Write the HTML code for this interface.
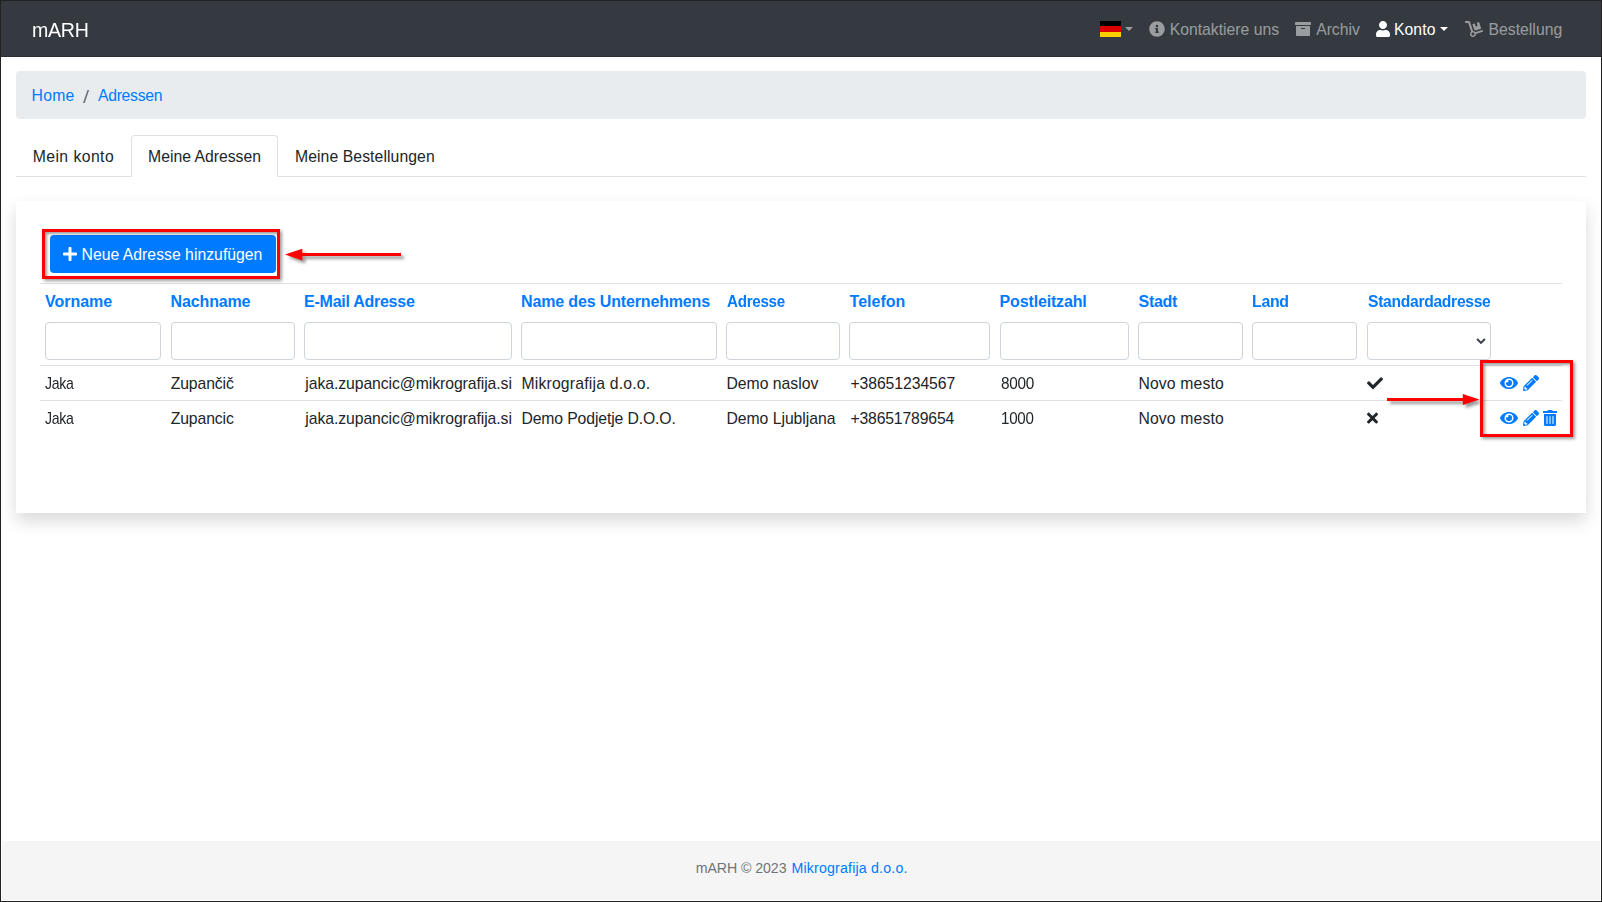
<!DOCTYPE html>
<html lang="de">
<head>
<meta charset="utf-8">
<title>mARH - Adressen</title>
<style>
*{box-sizing:border-box}
html,body{margin:0;padding:0}
body{width:1602px;height:902px;position:relative;overflow:hidden;background:#fff;font-family:"Liberation Sans",sans-serif;font-size:16px;color:#212529}
#frame{position:absolute;left:0;top:0;width:1602px;height:902px;border:1px solid #222;z-index:50;pointer-events:none}
a{text-decoration:none}
.t{position:absolute;white-space:nowrap;display:block}
.ic{position:absolute;display:block;overflow:visible}
.abs{position:absolute}
#nav{left:1px;top:1px;width:1600px;height:56px;background:#343a40;border-bottom:1px solid #292e34}
#bc{left:16px;top:71px;width:1570px;height:48px;background:#e9ecef;border-radius:4px}
#tabline{left:16px;top:176px;width:1570px;height:1px;background:#dee2e6}
#tabon{left:131px;top:135px;width:147px;height:42px;border:1px solid #dee2e6;border-bottom-color:#fff;border-radius:4px 4px 0 0;background:#fff}
#card{left:16px;top:201px;width:1570px;height:312px;background:#fff;box-shadow:0 8px 16px rgba(0,0,0,.15)}
#btn{left:50px;top:235px;width:226px;height:38px;background:#007bff;border-radius:4px;border:0;padding:0;margin:0}
.red{border:3px solid #ff0000;box-shadow:2px 2px 3px rgba(0,0,0,.38), inset 2px 2px 3px rgba(0,0,0,.38)}
.hl{left:40px;width:1522px;height:1px;background:#dee2e6}
.in{top:322px;height:38px;border:1px solid #ced4da;border-radius:4px;background:#fff;margin:0;padding:0 12px;outline:0;-webkit-appearance:none;appearance:none;font:inherit;color:#495057}
#foot{left:2px;top:841px;width:1598px;height:59px;background:#f5f5f5}
.caret{width:0;height:0;border-left:4.5px solid transparent;border-right:4.5px solid transparent;border-top:4.5px solid}
</style>
</head>
<body>
<header>
<nav id="nav" class="abs" aria-label="Hauptnavigation"></nav>
<span id="brand" class="t" style="left:31.80px;top:15.01px;font-size:19.7px;line-height:30px;font-weight:normal;color:#fff;letter-spacing:-0.300px;transform:scale(0.9955,1);transform-origin:0 0px">mARH</span>
<div class="navitems">
<div class="abs flag" title="Deutsch" style="left:1100px;top:21px;width:21px;height:16px;background:linear-gradient(#000 0,#000 33.3%,#dd0000 33.3%,#dd0000 66.6%,#ffce00 66.6%)"></div>
<div class="abs caret" style="left:1125px;top:27px;color:rgba(255,255,255,.5)"></div>
<svg class="ic" style="left:1149px;top:21px;width:16.000px;height:16px;" viewBox="0 0 512 512"><path fill="rgba(255,255,255,.5)" d="M256 8C119.043 8 8 119.083 8 256c0 136.997 111.043 248 248 248s248-111.003 248-248C504 119.083 392.957 8 256 8zm0 110c23.196 0 42 18.804 42 42s-18.804 42-42 42-42-18.804-42-42 18.804-42 42-42zm56 254c0 6.627-5.373 12-12 12h-88c-6.627 0-12-5.373-12-12v-24c0-6.627 5.373-12 12-12h12v-64h-12c-6.627 0-12-5.373-12-12v-24c0-6.627 5.373-12 12-12h64c6.627 0 12 5.373 12 12v100h12c6.627 0 12 5.373 12 12v24z"/></svg>
<span id="n1" class="t" style="left:1169.70px;top:18.21px;font-size:15.76px;line-height:24px;font-weight:normal;color:rgba(255,255,255,.5);letter-spacing:0.002px">Kontaktiere uns</span>
<svg class="ic" style="left:1295px;top:21px;width:16.000px;height:16px;" viewBox="0 0 512 512"><path fill="rgba(255,255,255,.5)" d="M32 448c0 17.700 14.300 32 32 32h384c17.700 0 32-14.300 32-32V160H32v288zm160-212c0-6.600 5.400-12 12-12h104c6.600 0 12 5.400 12 12v8c0 6.600-5.400 12-12 12H204c-6.600 0-12-5.400-12-12v-8zM480 32H32C14.300 32 0 46.300 0 64v48c0 8.800 7.200 16 16 16h480c8.800 0 16-7.200 16-16V64c0-17.700-14.300-32-32-32z"/></svg>
<span id="n2" class="t" style="left:1316.20px;top:18.21px;font-size:15.76px;line-height:24px;font-weight:normal;color:rgba(255,255,255,.5);letter-spacing:-0.037px">Archiv</span>
<svg class="ic" style="left:1376px;top:21px;width:14.000px;height:16px;" viewBox="0 0 448 512"><path fill="#fff" d="M224 256c70.700 0 128-57.300 128-128S294.700 0 224 0 96 57.300 96 128s57.300 128 128 128zm89.600 32h-16.700c-22.200 10.200-46.900 16-72.900 16s-50.600-5.800-72.900-16h-16.700C60.200 288 0 348.200 0 422.400V464c0 26.500 21.500 48 48 48h352c26.500 0 48-21.500 48-48v-41.600c0-74.200-60.200-134.400-134.400-134.400z"/></svg>
<span id="n3" class="t" style="left:1393.90px;top:18.21px;font-size:15.76px;line-height:24px;font-weight:normal;color:#fff;letter-spacing:0.100px">Konto</span>
<div class="abs caret" style="left:1440px;top:27px;color:#fff"></div>
<svg class="ic" style="left:1465px;top:21px;width:18.000px;height:16px;" viewBox="0 0 576 512"><path fill="rgba(255,255,255,.5)" d="M294.200 277.700c18 5 34.700 13.400 49.500 24.700l161.500-53.800c8.400-2.800 12.900-11.900 10.100-20.200L454.900 47.200c-2.800-8.400-11.900-12.900-20.200-10.100l-61.100 20.400 33.100 99.400L346 177l-33.100-99.400-61.600 20.500c-8.400 2.800-12.900 11.900-10.100 20.200l53 159.400zm281 48.700L565 296c-2.800-8.400-11.900-12.900-20.200-10.100l-213.500 71.200c-17.200-22-43.600-36.400-73.500-37L158.400 21.900C154 8.800 141.800 0 128 0H16C7.200 0 0 7.200 0 16v32c0 8.800 7.200 16 16 16h88.900l92.200 276.700c-26.100 20.400-41.700 53.600-36 90.500 6.100 39.400 37.900 72.300 77.300 79.200 60.200 10.700 112.300-34.800 113.400-92.600l213.300-71.200c8.300-2.800 12.900-11.800 10.100-20.200zM256 464c-26.500 0-48-21.500-48-48s21.500-48 48-48 48 21.500 48 48-21.500 48-48 48z"/></svg>
<span id="n4" class="t" style="left:1488.40px;top:18.21px;font-size:15.76px;line-height:24px;font-weight:normal;color:rgba(255,255,255,.5);letter-spacing:0.034px">Bestellung</span>
</div>
</header>
<main>
<nav aria-label="breadcrumb">
<div id="bc" class="abs"></div>
<a id="b1" class="t" style="left:31.50px;top:84.01px;font-size:15.76px;line-height:24px;font-weight:normal;color:#007bff;letter-spacing:0.282px">Home</a><span id="b2" class="t" style="left:82.60px;top:84.41px;font-size:15.76px;line-height:24px;font-weight:normal;color:#6c757d;letter-spacing:0.000px;transform:scale(1.4000,1.16);transform-origin:0 7px">/</span><a id="b3" class="t" style="left:98.00px;top:84.01px;font-size:15.76px;line-height:24px;font-weight:normal;color:#007bff;letter-spacing:-0.297px">Adressen</a>
</nav>
<div class="tabs" role="tablist">
<div id="tabline" class="abs"></div><div id="tabon" class="abs"></div>
<span id="t1" class="t" style="left:32.70px;top:145.01px;font-size:15.76px;line-height:24px;font-weight:normal;color:#212529;letter-spacing:0.435px">Mein konto</span><span id="t2" class="t" style="left:148.10px;top:145.01px;font-size:15.76px;line-height:24px;font-weight:normal;color:#212529;letter-spacing:-0.004px">Meine Adressen</span><span id="t3" class="t" style="left:295.00px;top:145.01px;font-size:15.76px;line-height:24px;font-weight:normal;color:#212529;letter-spacing:0.077px">Meine Bestellungen</span>
</div>
<section>
<div id="card" class="abs"></div>
<button id="btn" class="abs" type="button" aria-label="Neue Adresse hinzufügen"></button>
<svg class="ic" style="left:63px;top:246px;width:14.000px;height:16px;" viewBox="0 0 448 512"><path fill="#fff" d="M416 208H272V64c0-17.670-14.330-32-32-32h-32c-17.670 0-32 14.330-32 32v144H32c-17.670 0-32 14.330-32 32v32c0 17.670 14.330 32 32 32h144v144c0 17.670 14.330 32 32 32h32c17.670 0 32-14.330 32-32V304h144c17.670 0 32-14.330 32-32v-32c0-17.670-14.330-32-32-32z"/></svg>
<span id="bt" class="t" style="left:81.50px;top:242.81px;font-size:15.76px;line-height:24px;font-weight:normal;color:#fff;letter-spacing:0.023px">Neue Adresse hinzufügen</span>
<div class="grid" role="table">
<div class="abs hl" style="top:283px"></div>
<div class="abs hl" style="top:365px"></div>
<div class="abs hl" style="top:400px"></div>
<div role="row">
<span id="h1" class="t" style="left:45.00px;top:290.01px;font-size:16.0px;line-height:24px;font-weight:bold;color:#007bff;letter-spacing:-0.030px">Vorname</span>
<span id="h2" class="t" style="left:170.60px;top:290.01px;font-size:16.0px;line-height:24px;font-weight:bold;color:#007bff;letter-spacing:-0.146px">Nachname</span>
<span id="h3" class="t" style="left:304.10px;top:290.01px;font-size:16.0px;line-height:24px;font-weight:bold;color:#007bff;letter-spacing:-0.263px">E-Mail Adresse</span>
<span id="h4" class="t" style="left:521.10px;top:290.01px;font-size:16.0px;line-height:24px;font-weight:bold;color:#007bff;letter-spacing:-0.153px">Name des Unternehmens</span>
<span id="h5" class="t" style="left:726.80px;top:290.01px;font-size:16.0px;line-height:24px;font-weight:bold;color:#007bff;letter-spacing:-0.300px;transform:scale(0.9471,1);transform-origin:0 0px">Adresse</span>
<span id="h6" class="t" style="left:849.60px;top:290.01px;font-size:16.0px;line-height:24px;font-weight:bold;color:#007bff;letter-spacing:-0.005px">Telefon</span>
<span id="h7" class="t" style="left:999.60px;top:290.01px;font-size:16.0px;line-height:24px;font-weight:bold;color:#007bff;letter-spacing:-0.160px">Postleitzahl</span>
<span id="h8" class="t" style="left:1138.50px;top:290.01px;font-size:16.0px;line-height:24px;font-weight:bold;color:#007bff;letter-spacing:-0.268px">Stadt</span>
<span id="h9" class="t" style="left:1252.41px;top:290.01px;font-size:16.0px;line-height:24px;font-weight:bold;color:#007bff;letter-spacing:-0.300px;transform:scale(0.9931,1);transform-origin:0 0px">Land</span>
<span id="h10" class="t" style="left:1367.60px;top:290.01px;font-size:16.0px;line-height:24px;font-weight:bold;color:#007bff;letter-spacing:-0.300px;transform:scale(0.9774,1);transform-origin:0 0px">Standardadresse</span>
</div>
<div role="row">
<input class="abs in" type="text" style="left:45px;width:116px">
<input class="abs in" type="text" style="left:171px;width:124px">
<input class="abs in" type="text" style="left:304px;width:208px">
<input class="abs in" type="text" style="left:521px;width:196px">
<input class="abs in" type="text" style="left:726px;width:114px">
<input class="abs in" type="text" style="left:849px;width:141px">
<input class="abs in" type="text" style="left:1000px;width:129px">
<input class="abs in" type="text" style="left:1138px;width:105px">
<input class="abs in" type="text" style="left:1252px;width:105px">
<select class="abs in" style="left:1367px;width:124px"><option></option></select>
<svg class="ic" style="left:1476px;top:337px;width:10px;height:8px" viewBox="0 0 10 8"><path d="M1.100 2L5 5.900 8.900 2" fill="none" stroke="#3b4148" stroke-width="2"/></svg>
</div>
<div role="row">
<span id="r1a" class="t" style="left:44.90px;top:371.71px;font-size:15.76px;line-height:24px;font-weight:normal;color:#212529;letter-spacing:-0.300px;transform:scale(0.8924,1);transform-origin:0 0px">Jaka</span>
<span id="r1b" class="t" style="left:170.70px;top:371.71px;font-size:15.76px;line-height:24px;font-weight:normal;color:#212529;letter-spacing:-0.105px">Zupančič</span>
<span id="r1c" class="t" style="left:305.30px;top:371.71px;font-size:15.76px;line-height:24px;font-weight:normal;color:#212529;letter-spacing:-0.070px">jaka.zupancic@mikrografija.si</span>
<span id="r1d" class="t" style="left:521.40px;top:371.71px;font-size:15.76px;line-height:24px;font-weight:normal;color:#212529;letter-spacing:0.194px">Mikrografija d.o.o.</span>
<span id="r1e" class="t" style="left:726.40px;top:371.71px;font-size:15.76px;line-height:24px;font-weight:normal;color:#212529;letter-spacing:0.006px">Demo naslov</span>
<span id="r1f" class="t" style="left:850.40px;top:371.71px;font-size:15.76px;line-height:24px;font-weight:normal;color:#212529;letter-spacing:-0.063px">+38651234567</span>
<span id="r1g" class="t" style="left:1000.60px;top:371.71px;font-size:15.76px;line-height:24px;font-weight:normal;color:#212529;letter-spacing:-0.300px;transform:scale(0.9745,1);transform-origin:0 0px">8000</span>
<span id="r1h" class="t" style="left:1138.40px;top:371.71px;font-size:15.76px;line-height:24px;font-weight:normal;color:#212529;letter-spacing:0.147px">Novo mesto</span>
<svg class="ic" style="left:1367px;top:375px;width:16.000px;height:16px;transform:translate(0.00px,0.20px);" viewBox="0 0 512 512"><path fill="#212529" d="M173.898 439.404l-166.400-166.400c-9.997-9.997-9.997-26.206 0-36.204l36.203-36.204c9.997-9.998 26.207-9.998 36.204 0L192 312.690 432.095 72.596c9.997-9.997 26.207-9.997 36.204 0l36.203 36.204c9.997 9.997 9.997 26.206 0 36.204l-294.400 294.401c-9.998 9.997-26.207 9.997-36.204-.001z"/></svg>
<svg class="ic" style="left:1500px;top:375px;width:18.000px;height:16px;" viewBox="0 0 576 512"><path fill="#007bff" d="M572.52 241.4C518.29 135.59 410.93 64 288 64S57.68 135.64 3.48 241.41a32.35 32.35 0 0 0 0 29.19C57.71 376.41 165.07 448 288 448s230.32-71.64 284.52-177.41a32.35 32.35 0 0 0 0-29.19zM288 400a144 144 0 1 1 144-144 143.93 143.93 0 0 1-144 144zm0-240a95.31 95.31 0 0 0-25.31 3.79 47.85 47.85 0 0 1-66.9 66.9A95.78 95.78 0 1 0 288 160z"/></svg>
<svg class="ic" style="left:1523px;top:375px;width:16.000px;height:16px;" viewBox="0 0 512 512"><path fill="#007bff" d="M497.9 142.1l-46.1 46.1c-4.7 4.7-12.3 4.7-17 0l-111-111c-4.7-4.7-4.7-12.3 0-17l46.1-46.1c18.7-18.7 49.1-18.7 67.9 0l60.1 60.1c18.8 18.7 18.8 49.1 0 67.9zM284.2 99.8L21.6 362.4.4 483.9c-2.9 16.4 11.4 30.600 27.8 27.8l121.500-21.300 262.600-262.600c4.700-4.700 4.700-12.300 0-17l-111-111c-4.800-4.700-12.400-4.700-17.100 0zM124.100 339.900c-5.500-5.500-5.500-14.300 0-19.800l154-154c5.500-5.500 14.300-5.500 19.800 0s5.500 14.300 0 19.800l-154 154c-5.500 5.500-14.300 5.500-19.800 0zM88 424h48v36.300l-64.500 11.300-31.100-31.100L51.700 376H88v48z"/></svg>
</div>
<div role="row">
<span id="r2a" class="t" style="left:44.90px;top:406.51px;font-size:15.76px;line-height:24px;font-weight:normal;color:#212529;letter-spacing:-0.300px;transform:scale(0.8924,1);transform-origin:0 0px">Jaka</span>
<span id="r2b" class="t" style="left:170.70px;top:406.51px;font-size:15.76px;line-height:24px;font-weight:normal;color:#212529;letter-spacing:-0.105px">Zupancic</span>
<span id="r2c" class="t" style="left:305.30px;top:406.51px;font-size:15.76px;line-height:24px;font-weight:normal;color:#212529;letter-spacing:-0.070px">jaka.zupancic@mikrografija.si</span>
<span id="r2d" class="t" style="left:521.40px;top:406.51px;font-size:15.76px;line-height:24px;font-weight:normal;color:#212529;letter-spacing:-0.116px">Demo Podjetje D.O.O.</span>
<span id="r2e" class="t" style="left:726.40px;top:406.51px;font-size:15.76px;line-height:24px;font-weight:normal;color:#212529;letter-spacing:-0.022px">Demo Ljubljana</span>
<span id="r2f" class="t" style="left:850.40px;top:406.51px;font-size:15.76px;line-height:24px;font-weight:normal;color:#212529;letter-spacing:-0.154px">+38651789654</span>
<span id="r2g" class="t" style="left:1001.04px;top:406.51px;font-size:15.76px;line-height:24px;font-weight:normal;color:#212529;letter-spacing:-0.300px;transform:scale(0.9617,1);transform-origin:0 0px">1000</span>
<span id="r2h" class="t" style="left:1138.40px;top:406.51px;font-size:15.76px;line-height:24px;font-weight:normal;color:#212529;letter-spacing:0.147px">Novo mesto</span>
<svg class="ic" style="left:1367px;top:410px;width:11.000px;height:16px;transform:translate(0.00px,0.10px);" viewBox="0 0 352 512"><path fill="#212529" d="M242.720 256l100.070-100.070c12.280-12.280 12.280-32.190 0-44.480l-22.240-22.240c-12.280-12.280-32.190-12.280-44.480 0L176 189.280 75.930 89.210c-12.280-12.280-32.190-12.280-44.480 0L9.210 111.450c-12.280 12.280-12.280 32.190 0 44.480L109.280 256 9.210 356.070c-12.280 12.280-12.280 32.190 0 44.480l22.240 22.240c12.280 12.280 32.200 12.280 44.480 0L176 322.720l100.070 100.070c12.280 12.280 32.200 12.280 44.480 0l22.240-22.240c12.280-12.280 12.280-32.190 0-44.480L242.720 256z"/></svg>
<svg class="ic" style="left:1500px;top:410px;width:18.000px;height:16px;" viewBox="0 0 576 512"><path fill="#007bff" d="M572.52 241.4C518.29 135.59 410.93 64 288 64S57.68 135.64 3.48 241.41a32.35 32.35 0 0 0 0 29.19C57.71 376.41 165.07 448 288 448s230.32-71.64 284.52-177.41a32.35 32.35 0 0 0 0-29.19zM288 400a144 144 0 1 1 144-144 143.93 143.93 0 0 1-144 144zm0-240a95.31 95.31 0 0 0-25.31 3.79 47.85 47.85 0 0 1-66.9 66.9A95.78 95.78 0 1 0 288 160z"/></svg>
<svg class="ic" style="left:1523px;top:410px;width:16.000px;height:16px;" viewBox="0 0 512 512"><path fill="#007bff" d="M497.9 142.1l-46.1 46.1c-4.7 4.7-12.3 4.7-17 0l-111-111c-4.7-4.7-4.7-12.3 0-17l46.1-46.1c18.7-18.7 49.1-18.7 67.9 0l60.1 60.1c18.8 18.7 18.8 49.1 0 67.9zM284.2 99.8L21.6 362.4.4 483.9c-2.9 16.4 11.4 30.600 27.8 27.8l121.500-21.300 262.600-262.600c4.700-4.700 4.700-12.300 0-17l-111-111c-4.800-4.700-12.400-4.700-17.100 0zM124.100 339.900c-5.500-5.500-5.500-14.300 0-19.800l154-154c5.500-5.500 14.300-5.500 19.800 0s5.500 14.300 0 19.800l-154 154c-5.500 5.500-14.300 5.500-19.800 0zM88 424h48v36.300l-64.500 11.300-31.100-31.100L51.700 376H88v48z"/></svg>
<svg class="ic" style="left:1543px;top:410px;width:14.000px;height:16px;" viewBox="0 0 448 512"><path fill="#007bff" d="M32 464a48 48 0 0 0 48 48h288a48 48 0 0 0 48-48V128H32zm272-256a16 16 0 0 1 32 0v224a16 16 0 0 1-32 0zm-96 0a16 16 0 0 1 32 0v224a16 16 0 0 1-32 0zm-96 0a16 16 0 0 1 32 0v224a16 16 0 0 1-32 0zM432 32H312l-9.400-18.700A24 24 0 0 0 281.100 0H166.800a23.720 23.720 0 0 0-21.400 13.300L136 32H16A16 16 0 0 0 0 48v32a16 16 0 0 0 16 16h416a16 16 0 0 0 16-16V48a16 16 0 0 0-16-16z"/></svg>
</div>
</div>
</section>
<div class="annot">
<svg class="ic" style="left:280px;top:240px;width:130px;height:30px;filter:drop-shadow(3px 3px 1.4px rgba(0,0,0,.4))" viewBox="0 0 130 30"><path fill="#ff0000" d="M4.9 14.500L22.300 8.700v4.300h98.700v3h-98.700v4.400z"/></svg>
<svg class="ic" style="left:1380px;top:385px;width:110px;height:30px;filter:drop-shadow(3px 3px 1.4px rgba(0,0,0,.4))" viewBox="0 0 110 30"><path fill="#ff0000" d="M99.500 14.500L82.800 9v4H7v3h75.800v4z"/></svg>
<div class="abs red" style="left:42px;top:229px;width:238px;height:50px"></div>
<div class="abs red" style="left:1480px;top:360px;width:93px;height:77px"></div>
</div>
</main>
<footer>
<div id="foot" class="abs"></div>
<span id="f1" class="t" style="left:695.70px;top:857.01px;font-size:14.18px;line-height:22px;font-weight:normal;color:#6c757d;letter-spacing:-0.069px">mARH © 2023</span><a id="f2" class="t" style="left:791.40px;top:857.01px;font-size:14.18px;line-height:22px;font-weight:normal;color:#007bff;letter-spacing:0.189px">Mikrografija d.o.o.</a>
</footer>
<div id="frame"></div>
</body>
</html>
